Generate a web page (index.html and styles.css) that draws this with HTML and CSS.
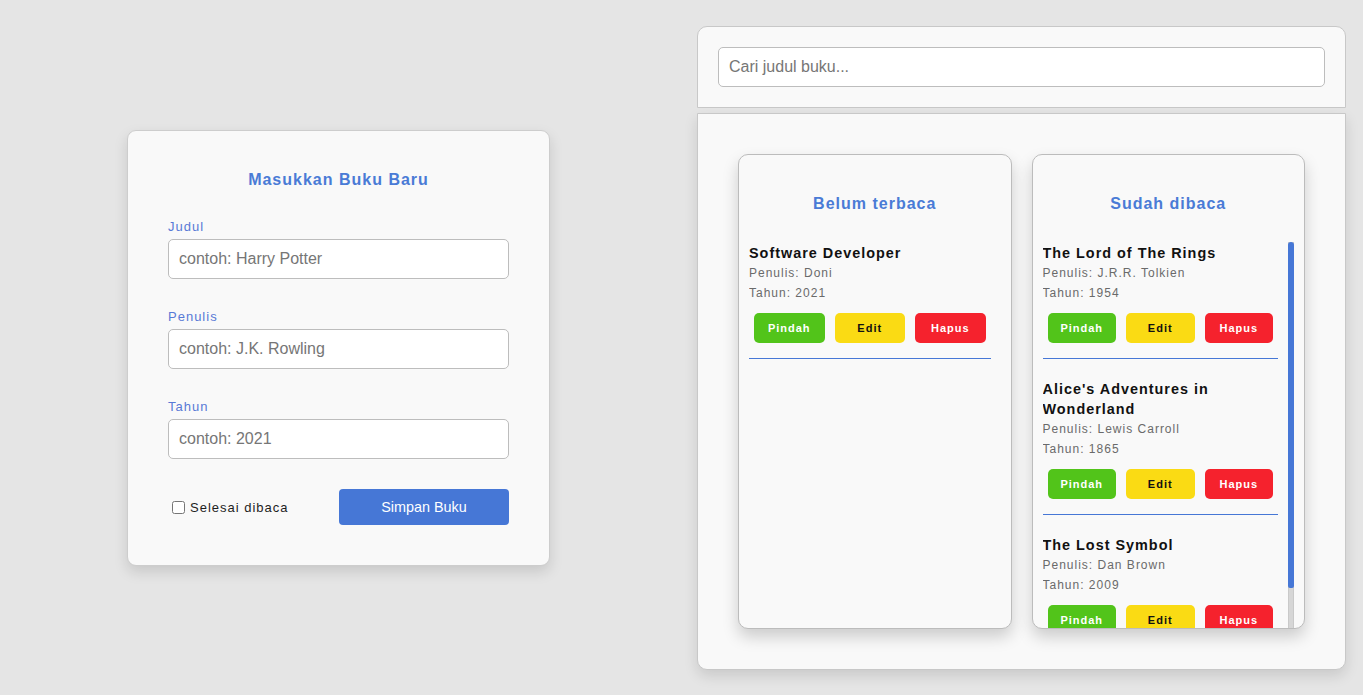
FILE: index.html
```html
<!DOCTYPE html>
<html lang="id">
<head>
<meta charset="utf-8">
<title>Bookshelf</title>
<link rel="stylesheet" href="styles.css">
</head>
<body>
<div class="page">
  <section class="form-card">
    <h2 class="form-title">Masukkan Buku Baru</h2>
    <div class="field">
      <label for="judul">Judul</label>
      <input id="judul" type="text" placeholder="contoh: Harry Potter">
    </div>
    <div class="field">
      <label for="penulis">Penulis</label>
      <input id="penulis" type="text" placeholder="contoh: J.K. Rowling">
    </div>
    <div class="field field-last">
      <label for="tahun">Tahun</label>
      <input id="tahun" type="text" placeholder="contoh: 2021">
    </div>
    <div class="form-footer">
      <label class="check"><input type="checkbox">Selesai dibaca</label>
      <button class="btn-submit" type="button">Simpan Buku</button>
    </div>
  </section>

  <div class="right">
    <div class="search-bar">
      <input type="text" placeholder="Cari judul buku..." autofocus>
    </div>
    <div class="shelves">
      <div class="shelf">
        <h2 class="shelf-title">Belum terbaca</h2>
        <div class="list-wrap">
          <div class="book-list">
            <article class="book">
              <h3>Software Developer</h3>
              <p>Penulis: Doni</p>
              <p>Tahun: 2021</p>
              <div class="actions">
                <button class="btn green" type="button">Pindah</button>
                <button class="btn yellow" type="button">Edit</button>
                <button class="btn red" type="button">Hapus</button>
              </div>
            </article>
          </div>
        </div>
      </div>
      <div class="shelf">
        <h2 class="shelf-title">Sudah dibaca</h2>
        <div class="list-wrap">
          <div class="book-list">
            <article class="book">
              <h3>The Lord of The Rings</h3>
              <p>Penulis: J.R.R. Tolkien</p>
              <p>Tahun: 1954</p>
              <div class="actions">
                <button class="btn green" type="button">Pindah</button>
                <button class="btn yellow" type="button">Edit</button>
                <button class="btn red" type="button">Hapus</button>
              </div>
            </article>
            <article class="book">
              <h3>Alice's Adventures in Wonderland</h3>
              <p>Penulis: Lewis Carroll</p>
              <p>Tahun: 1865</p>
              <div class="actions">
                <button class="btn green" type="button">Pindah</button>
                <button class="btn yellow" type="button">Edit</button>
                <button class="btn red" type="button">Hapus</button>
              </div>
            </article>
            <article class="book">
              <h3>The Lost Symbol</h3>
              <p>Penulis: Dan Brown</p>
              <p>Tahun: 2009</p>
              <div class="actions">
                <button class="btn green" type="button">Pindah</button>
                <button class="btn yellow" type="button">Edit</button>
                <button class="btn red" type="button">Hapus</button>
              </div>
            </article>
          </div>
          <div class="scrollbar"><div class="thumb"></div></div>
        </div>
      </div>
    </div>
  </div>
</div>
</body>
</html>
```

FILE: styles.css
```css
* {
  box-sizing: border-box;
}

html, body {
  margin: 0;
  padding: 0;
}

body {
  background: #e5e5e5;
  font-family: "Liberation Sans", Arial, sans-serif;
  color: #111;
}

.page {
  height: 695px;
  display: flex;
  justify-content: space-between;
  align-items: center;
  padding: 0 17px 0 127px;
}

/* ---------- form card ---------- */
.form-card {
  width: 423px;
  padding: 39px 40px 40px;
  background: #f9f9f9;
  border: 1px solid #cdcdcd;
  border-radius: 9px;
  box-shadow: 0 6px 14px rgba(0, 0, 0, 0.13);
}

.form-title {
  margin: 0 0 28px;
  font-size: 16px;
  line-height: 20px;
  font-weight: bold;
  letter-spacing: 1px;
  text-align: center;
  color: #4a7bd6;
}

.field {
  margin-bottom: 29px;
}

.field-last {
  margin-bottom: 30px;
}

.field label {
  display: block;
  margin-bottom: 3px;
  font-size: 13px;
  line-height: 18px;
  letter-spacing: 1px;
  color: #5879d6;
}

.field input,
.search-bar input {
  display: block;
  width: 100%;
  height: 40px;
  padding: 0 10px;
  background: #fff;
  border: 1px solid #bdbdbd;
  border-radius: 5px;
  font-family: "Liberation Sans", Arial, sans-serif;
  font-size: 16px;
  color: #222;
  outline: none;
}

.field input::placeholder,
.search-bar input::placeholder {
  color: #767676;
}

.form-footer {
  display: flex;
  justify-content: space-between;
  align-items: center;
}

.check {
  display: flex;
  align-items: center;
  padding-top: 1px;
  font-size: 13px;
  letter-spacing: 1px;
  color: #1e1e1e;
}

.check input {
  width: 13px;
  height: 13px;
  margin: 0 5px 0 4px;
}

.btn-submit {
  width: 170px;
  height: 36px;
  border: none;
  border-radius: 4px;
  background: #4677d6;
  color: #fff;
  font-family: "Liberation Sans", Arial, sans-serif;
  font-size: 14.4px;
}

/* ---------- right side ---------- */
.right {
  width: 649px;
  display: flex;
  flex-direction: column;
  gap: 5px;
}

.search-bar {
  padding: 20px;
  background: #f9f9f9;
  border: 1px solid #c8c8c8;
  border-radius: 10px 10px 0 0;
}

.shelves {
  height: 557px;
  padding: 40px;
  display: grid;
  grid-template-columns: 1fr 1fr;
  gap: 20px;
  background: #f9f9f9;
  border: 1px solid #c8c8c8;
  border-radius: 0 0 10px 10px;
  box-shadow: 0 6px 14px rgba(0, 0, 0, 0.12);
}

.shelf {
  min-height: 0;
  display: flex;
  flex-direction: column;
  padding: 39px 10px 0;
  background: #f9f9f9;
  border: 1px solid #bcbcbc;
  border-radius: 10px;
  box-shadow: 0 8px 16px rgba(0, 0, 0, 0.18);
  overflow: hidden;
}

.shelf-title {
  margin: 0 0 28px;
  font-size: 16px;
  line-height: 20px;
  font-weight: bold;
  letter-spacing: 1px;
  text-align: center;
  color: #4a7bd6;
}

.list-wrap {
  flex: 1;
  min-height: 0;
  display: flex;
}

.book-list {
  flex: 1;
  min-width: 0;
  overflow: hidden;
  padding-right: 10px;
}

.scrollbar {
  flex: none;
  width: 6px;
  background: #d6d6d6;
  border-left: 1px solid #c9c9c9;
  border-right: 1px solid #c9c9c9;
}

.thumb {
  height: 346px;
  margin: 0 -1px;
  background: #4677d6;
  border-radius: 3px 3px 2px 2px;
}

.book {
  padding-top: 1px;
  padding-bottom: 15px;
  margin-bottom: 19px;
  border-bottom: 1px solid #4677d6;
}

.book h3 {
  margin: 0;
  font-size: 14.4px;
  line-height: 20px;
  font-weight: bold;
  letter-spacing: 1px;
  color: #111;
}

.book p {
  margin: 0;
  font-size: 12px;
  line-height: 20px;
  letter-spacing: 1px;
  color: #6a6a6a;
}

.actions {
  display: flex;
  margin-top: 10px;
}

.btn {
  flex: 1;
  min-width: 0;
  height: 30px;
  margin: 0 5px;
  padding: 0;
  border: none;
  border-radius: 5px;
  font-family: "Liberation Sans", Arial, sans-serif;
  font-size: 11px;
  font-weight: bold;
  letter-spacing: 1px;
}

.green {
  background: #52c41a;
  color: #fff;
}

.yellow {
  background: #fadb14;
  color: #111;
}

.red {
  background: #f5222d;
  color: #fff;
}
```
